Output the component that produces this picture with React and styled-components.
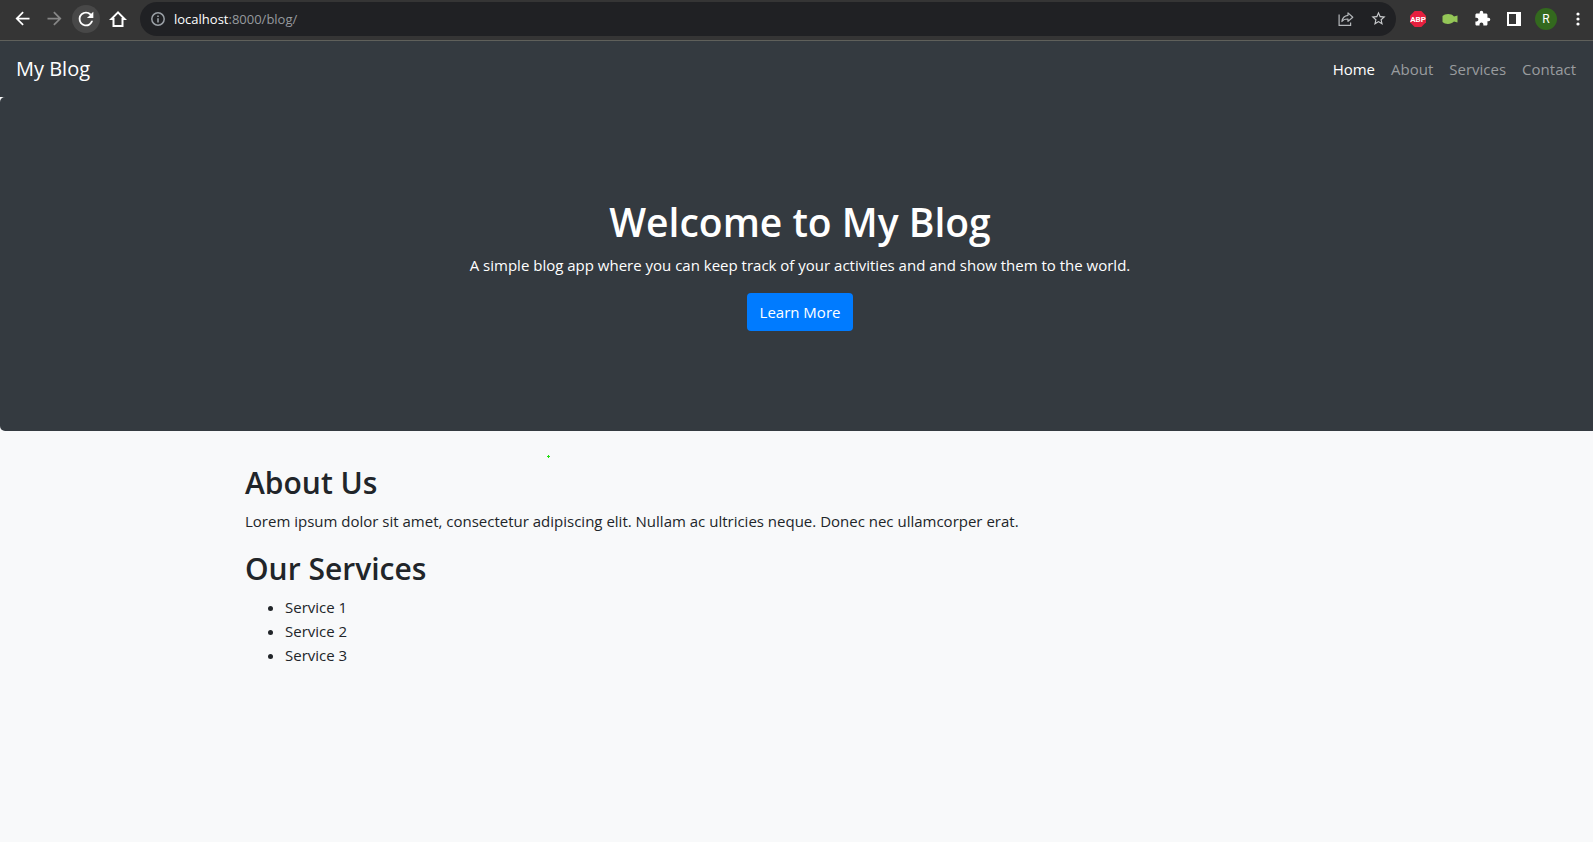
import React from "react";
import styled, { createGlobalStyle } from "styled-components";

const GlobalStyle = createGlobalStyle`
  *, *::before, *::after { box-sizing: border-box; }
  html { overflow-x: hidden; background: #f8f9fa; }
  body {
    margin: 0;
    overflow-x: hidden;
    background: #f8f9fa;
    color: #212529;
    font-family: "Segoe UI", "Open Sans", "Noto Sans", sans-serif;
    font-size: 15px;
    line-height: 24px;
  }
`;

/* The window runs slightly past the right edge of the viewport. */
const Window = styled.div`
  width: calc(100% + 7px);
`;

/* Browser toolbar */

const Toolbar = styled.header`
  display: flex;
  align-items: center;
  height: 41px;
  padding: 0 6px 3px;
  background: #353535;
  border-bottom: 1px solid #5f605b;
`;

const ToolButton = styled.button`
  display: flex;
  flex: none;
  align-items: center;
  justify-content: center;
  width: 32px;
  height: 32px;
  padding: 0;
  border: 0;
  background: none;
  color: ${(p) => p.$tone || "#ffffff"};
`;

const Halo = styled.span`
  display: flex;
  align-items: center;
  justify-content: center;
  width: 28px;
  height: 28px;
  border-radius: 50%;
  background: #484848;
`;

const AddressBar = styled.form`
  display: flex;
  flex: 1;
  align-items: center;
  height: 34px;
  margin: 0 6px;
  padding: 0 2px 0 11px;
  border-radius: 17px;
  background: #202124;
  font-size: 13px;
  line-height: 20px;
`;

const Host = styled.label`
  margin-left: 9px;
  color: #ffffff;
`;

const AddressInput = styled.input`
  flex: 1;
  min-width: 0;
  padding: 0;
  border: 0;
  outline: 0;
  background: none;
  color: #969a9e;
  font: inherit;
`;

const Avatar = styled.span`
  display: flex;
  align-items: center;
  justify-content: center;
  width: 22px;
  height: 22px;
  border-radius: 50%;
  background: #33691e;
  color: #ffffff;
  font-family: Roboto, sans-serif;
  font-size: 12px;
  line-height: 22px;
`;

/* Blog page */

const Navbar = styled.nav`
  display: flex;
  align-items: center;
  justify-content: space-between;
  height: 56px;
  padding: 8px 16px;
  background: #343a40;
`;

const Brand = styled.a`
  color: #ffffff;
  font-size: 20px;
  line-height: 30px;
  text-decoration: none;
`;

const NavList = styled.ul`
  display: flex;
  margin: 0;
  padding: 0;
  list-style: none;
`;

const NavLink = styled.a`
  display: block;
  padding: 8px;
  color: ${(p) => (p.$active ? "#ffffff" : "#999c9f")};
  text-decoration: none;
`;

const Hero = styled.section`
  padding: 100px 32px;
  border-radius: 5px;
  background: #343a40;
  color: #ffffff;
  text-align: center;
`;

const HeroTitle = styled.h1`
  margin: 0 0 6px;
  font-size: 39px;
  font-weight: 600;
  line-height: 50px;
`;

const Paragraph = styled.p`
  margin: 0 0 16px;
`;

const PrimaryButton = styled.button`
  height: 38px;
  padding: 6px 13px;
  border: 0;
  border-radius: 4px;
  background: #007bff;
  color: #ffffff;
  font: inherit;
  vertical-align: top;
`;

const Container = styled.main`
  position: relative;
  max-width: 1140px;
  margin: 32px auto 0;
  padding: 0 15px;
`;

const Speck = styled.svg`
  position: absolute;
  top: -8px;
  left: 317px;
`;

const SectionTitle = styled.h2`
  margin: 0 0 6px;
  font-size: 30px;
  font-weight: 600;
  line-height: 40px;
`;

const ServiceList = styled.ul`
  margin: 0 0 16px;
  padding-left: 40px;
`;

const Glyph = ({ d, size, flip }) => (
  <svg width={size} height={size} viewBox="0 0 24 24" fill="currentColor" aria-hidden="true">
    <path d={d} transform={flip ? "matrix(-1 0 0 1 24 0)" : undefined} />
  </svg>
);

const ARROW = "M20 11H7.83l5.59-5.59L12 4l-8 8 8 8 1.41-1.41L7.83 13H20v-2z";
const RELOAD =
  "M17.65 6.35A7.958 7.958 0 0 0 12 4a8 8 0 1 0 7.73 10h-2.08A5.99 5.99 0 0 1 12 18c-3.31 0-6-2.69-6-6s2.69-6 6-6c1.66 0 3.14.69 4.22 1.78L13 11h7V4l-2.35 2.35z";
const STAR =
  "M22 9.24l-7.19-.62L12 2 9.19 8.63 2 9.24l5.46 4.73L5.82 21 12 17.27 18.18 21l-1.63-7.03L22 9.24zM12 15.4l-3.76 2.27 1-4.28-3.32-2.88 4.38-.38L12 6.1l1.71 4.04 4.38.38-3.32 2.88 1 4.28L12 15.4z";
const PUZZLE =
  "M20.5 11H19V7c0-1.1-.9-2-2-2h-4V3.5a2.5 2.5 0 0 0-5 0V5H4c-1.1 0-1.99.9-1.99 2v3.8H3.5c1.49 0 2.7 1.21 2.7 2.7s-1.21 2.7-2.7 2.7H2V20c0 1.1.9 2 2 2h3.8v-1.5c0-1.49 1.21-2.7 2.7-2.7s2.7 1.21 2.7 2.7V22H17c1.1 0 2-.9 2-2v-4h1.5a2.5 2.5 0 0 0 0-5z";

const HomeIcon = () => (
  <svg width="18" height="18" viewBox="0 0 18 18" fill="none" stroke="currentColor" strokeWidth="2" aria-hidden="true">
    <path d="M9 2.4L2.4 9H4.5V16H13.5V9H15.6Z" />
  </svg>
);

const InfoIcon = () => (
  <svg width="14" height="14" viewBox="0 0 14 14" fill="none" stroke="#9aa0a6" aria-hidden="true">
    <circle cx="7" cy="7" r="6.2" strokeWidth="1.5" />
    <path d="M7 6.2V10.6M7 3.4V5" strokeWidth="1.6" />
  </svg>
);

const ShareIcon = () => (
  <svg width="16" height="16" viewBox="0 0 16 16" fill="none" stroke="#b4b7ba" strokeWidth="1.2" aria-hidden="true">
    <path d="M1.1 3.5V14.4H12.6V11.6" />
    <path d="M10 1.9L14.8 6.2L10 10.4V8C7.2 7.9 5.2 8.6 3.9 10.5C4.3 7.2 6.3 4.7 10 4.3Z" strokeLinejoin="round" />
  </svg>
);

const AdblockIcon = () => (
  <svg width="16" height="16" viewBox="0 0 16 16" aria-hidden="true">
    <path d="M4.7 0H11.3L16 4.7V11.3L11.3 16H4.7L0 11.3V4.7Z" fill="#e6203f" />
    <text x="8" y="11" textAnchor="middle" fontFamily="Roboto, sans-serif" fontSize="8" fontWeight="700" fill="#ffffff">ABP</text>
  </svg>
);

const FishIcon = () => (
  <svg width="16" height="12" viewBox="0 0 16 12" aria-hidden="true">
    <path d="M0.5 3C3 0.6 9 0 12 3.5L15.5 2.5V9.5L12 8.5C9 11.8 3 11.4 0.5 9Z" fill="#94c657" />
  </svg>
);

const PanelIcon = () => (
  <svg width="14" height="14" viewBox="0 0 14 14" aria-hidden="true">
    <path d="M0 0H14V14H0ZM2 2V12H9V2Z" fill="#ffffff" fillRule="evenodd" />
  </svg>
);

const MenuIcon = () => (
  <svg width="4" height="14" viewBox="0 0 4 14" fill="#ffffff" aria-hidden="true">
    <circle cx="2" cy="2" r="1.6" />
    <circle cx="2" cy="7" r="1.6" />
    <circle cx="2" cy="12" r="1.6" />
  </svg>
);

const links = ["Home", "About", "Services", "Contact"];
const services = ["Service 1", "Service 2", "Service 3"];

export default function App() {
  return (
    <Window>
      <GlobalStyle />
      <Toolbar>
        <ToolButton aria-label="Back"><Glyph d={ARROW} size={21} /></ToolButton>
        <ToolButton aria-label="Forward" $tone="#868686"><Glyph d={ARROW} size={21} flip /></ToolButton>
        <ToolButton aria-label="Reload"><Halo><Glyph d={RELOAD} size={22} /></Halo></ToolButton>
        <ToolButton aria-label="Home page"><HomeIcon /></ToolButton>
        <AddressBar onSubmit={(e) => e.preventDefault()}>
          <InfoIcon />
          <Host htmlFor="address">localhost</Host>
          <AddressInput id="address" type="text" defaultValue=":8000/blog/" />
          <ToolButton type="button" aria-label="Share"><ShareIcon /></ToolButton>
          <ToolButton type="button" aria-label="Bookmark" $tone="#c8cacc"><Glyph d={STAR} size={17} /></ToolButton>
        </AddressBar>
        <ToolButton aria-label="Ad blocker"><AdblockIcon /></ToolButton>
        <ToolButton aria-label="Fish extension"><FishIcon /></ToolButton>
        <ToolButton aria-label="Extensions"><Glyph d={PUZZLE} size={17} /></ToolButton>
        <ToolButton aria-label="Side panel"><PanelIcon /></ToolButton>
        <ToolButton aria-label="Profile"><Avatar>R</Avatar></ToolButton>
        <ToolButton aria-label="Menu"><MenuIcon /></ToolButton>
      </Toolbar>

      <Navbar>
        <Brand href="#">My Blog</Brand>
        <NavList>
          {links.map((name, i) => (
            <li key={name}>
              <NavLink href="#" $active={i === 0}>{name}</NavLink>
            </li>
          ))}
        </NavList>
      </Navbar>

      <Hero>
        <HeroTitle>Welcome to My Blog</HeroTitle>
        <Paragraph>A simple blog app where you can keep track of your activities and and show them to the world.</Paragraph>
        <PrimaryButton type="button">Learn More</PrimaryButton>
      </Hero>

      <Container>
        <Speck width="3" height="3" viewBox="0 0 3 3" aria-hidden="true">
          <path d="M1 0H2V1H3V2H2V3H1V2H0V1H1Z" fill="#22dd11" />
        </Speck>
        <SectionTitle>About Us</SectionTitle>
        <Paragraph>Lorem ipsum dolor sit amet, consectetur adipiscing elit. Nullam ac ultricies neque. Donec nec ullamcorper erat.</Paragraph>
        <SectionTitle>Our Services</SectionTitle>
        <ServiceList>
          {services.map((name) => (
            <li key={name}>{name}</li>
          ))}
        </ServiceList>
      </Container>
    </Window>
  );
}
